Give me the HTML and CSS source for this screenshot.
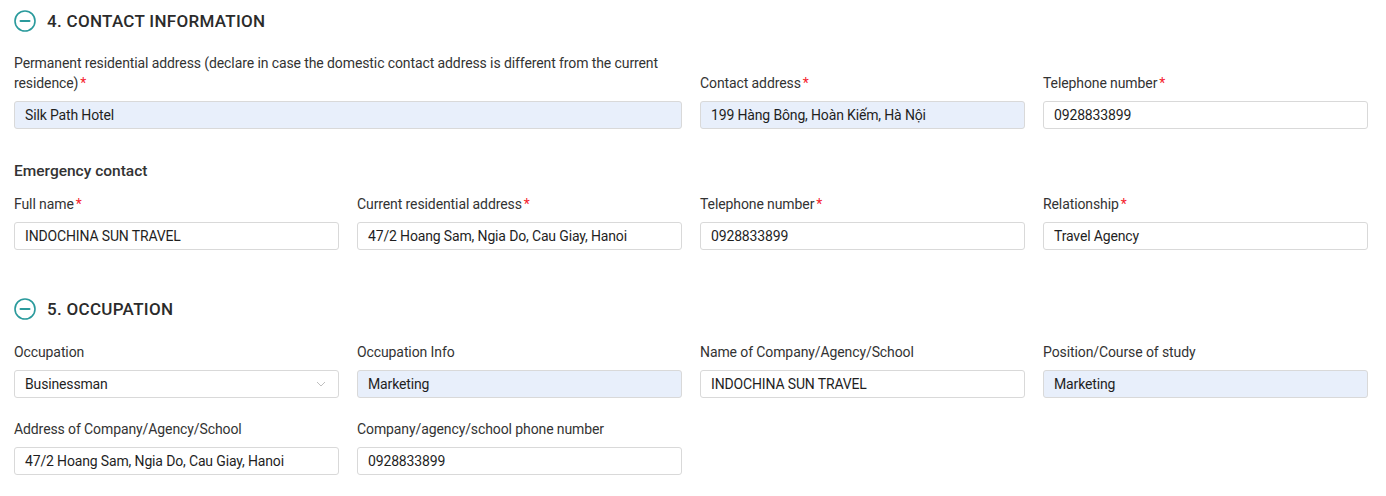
FILE: index.html
```html
<!DOCTYPE html>
<html>
<head>
<meta charset="utf-8">
<link rel="stylesheet" href="styles.css">
</head>
<body>
<div class="page">
  <div class="section-head">
    <svg class="toggle" width="22" height="22" viewBox="0 0 22 22"><circle cx="11" cy="11" r="10" fill="none" stroke="#2a9a9c" stroke-width="1.6"/><line x1="6.5" y1="11" x2="15.5" y2="11" stroke="#2a9a9c" stroke-width="2" stroke-linecap="round"/></svg>
    <span class="section-title">4. CONTACT INFORMATION</span>
  </div>

  <div class="grid row-1">
    <div class="field span-2">
      <label class="label">Permanent residential address (declare in case the domestic contact address is different from the current residence)<span class="req">*</span></label>
      <div class="input filled">Silk Path Hotel</div>
    </div>
    <div class="field">
      <label class="label">Contact address<span class="req">*</span></label>
      <div class="input filled">199 Hàng Bông, Hoàn Kiếm, Hà Nội</div>
    </div>
    <div class="field">
      <label class="label">Telephone number<span class="req">*</span></label>
      <div class="input">0928833899</div>
    </div>
  </div>

  <div class="sub-title">Emergency contact</div>

  <div class="grid row-2">
    <div class="field">
      <label class="label">Full name<span class="req">*</span></label>
      <div class="input">INDOCHINA SUN TRAVEL</div>
    </div>
    <div class="field">
      <label class="label">Current residential address<span class="req">*</span></label>
      <div class="input">47/2 Hoang Sam, Ngia Do, Cau Giay, Hanoi</div>
    </div>
    <div class="field">
      <label class="label">Telephone number<span class="req">*</span></label>
      <div class="input">0928833899</div>
    </div>
    <div class="field">
      <label class="label">Relationship<span class="req">*</span></label>
      <div class="input">Travel Agency</div>
    </div>
  </div>

  <div class="section-head section-5">
    <svg class="toggle" width="22" height="22" viewBox="0 0 22 22"><circle cx="11" cy="11" r="10" fill="none" stroke="#2a9a9c" stroke-width="1.6"/><line x1="6.5" y1="11" x2="15.5" y2="11" stroke="#2a9a9c" stroke-width="2" stroke-linecap="round"/></svg>
    <span class="section-title">5. OCCUPATION</span>
  </div>

  <div class="grid row-3">
    <div class="field">
      <label class="label">Occupation</label>
      <div class="input select">
        <span>Businessman</span>
        <svg width="10" height="6" viewBox="0 0 10 6"><polyline points="1,1 5,5 9,1" fill="none" stroke="#bfbfbf" stroke-width="1"/></svg>
      </div>
    </div>
    <div class="field">
      <label class="label">Occupation Info</label>
      <div class="input filled">Marketing</div>
    </div>
    <div class="field">
      <label class="label">Name of Company/Agency/School</label>
      <div class="input">INDOCHINA SUN TRAVEL</div>
    </div>
    <div class="field">
      <label class="label">Position/Course of study</label>
      <div class="input filled">Marketing</div>
    </div>
  </div>

  <div class="grid row-4">
    <div class="field">
      <label class="label">Address of Company/Agency/School</label>
      <div class="input">47/2 Hoang Sam, Ngia Do, Cau Giay, Hanoi</div>
    </div>
    <div class="field">
      <label class="label">Company/agency/school phone number</label>
      <div class="input">0928833899</div>
    </div>
  </div>
</div>
</body>
</html>
```

FILE: styles.css
```css
* { box-sizing: border-box; }
html, body { margin: 0; padding: 0; background: #fff; }
body {
  font-family: "Roboto", "Liberation Sans", sans-serif;
  color: #333;
  font-size: 14px;
}
.page {
  padding: 10px 18px 0 14px;
}
.section-head {
  display: flex;
  align-items: center;
  gap: 11px;
  height: 22px;
}
.toggle { flex: none; display: block; }
.section-title {
  font-size: 17px;
  font-weight: 500;
  color: #2b2b2b;
  letter-spacing: 0.3px;
}
.section-5 { margin-top: 48px; }
.grid {
  display: grid;
  grid-template-columns: repeat(4, 1fr);
  column-gap: 18px;
  align-items: end;
}
.row-1 { margin-top: 21px; }
.row-2 { margin-top: 13px; }
.row-3 { margin-top: 22px; }
.row-4 { margin-top: 21px; }
.span-2 { grid-column: span 2; }
.field { display: flex; flex-direction: column; min-width: 0; }
.label {
  display: block;
  line-height: 20px;
  font-size: 14px;
  color: #333;
  margin-bottom: 8px;
  letter-spacing: -0.1px;
}
.req { color: #f5222d; margin-left: 2px; }
.input {
  height: 28px;
  border: 1px solid #d9d9d9;
  border-radius: 3px;
  padding: 0 10px;
  display: flex;
  align-items: center;
  font-size: 14px;
  color: #1f1f1f;
  background: #fff;
  white-space: nowrap;
  overflow: hidden;
  letter-spacing: -0.15px;
}
.input.filled { background: #e8effb; }
.input.select { justify-content: space-between; padding-right: 12px; }
.sub-title {
  margin-top: 32px;
  line-height: 20px;
  font-size: 15.5px;
  font-weight: 500;
  color: #333;
}
```
